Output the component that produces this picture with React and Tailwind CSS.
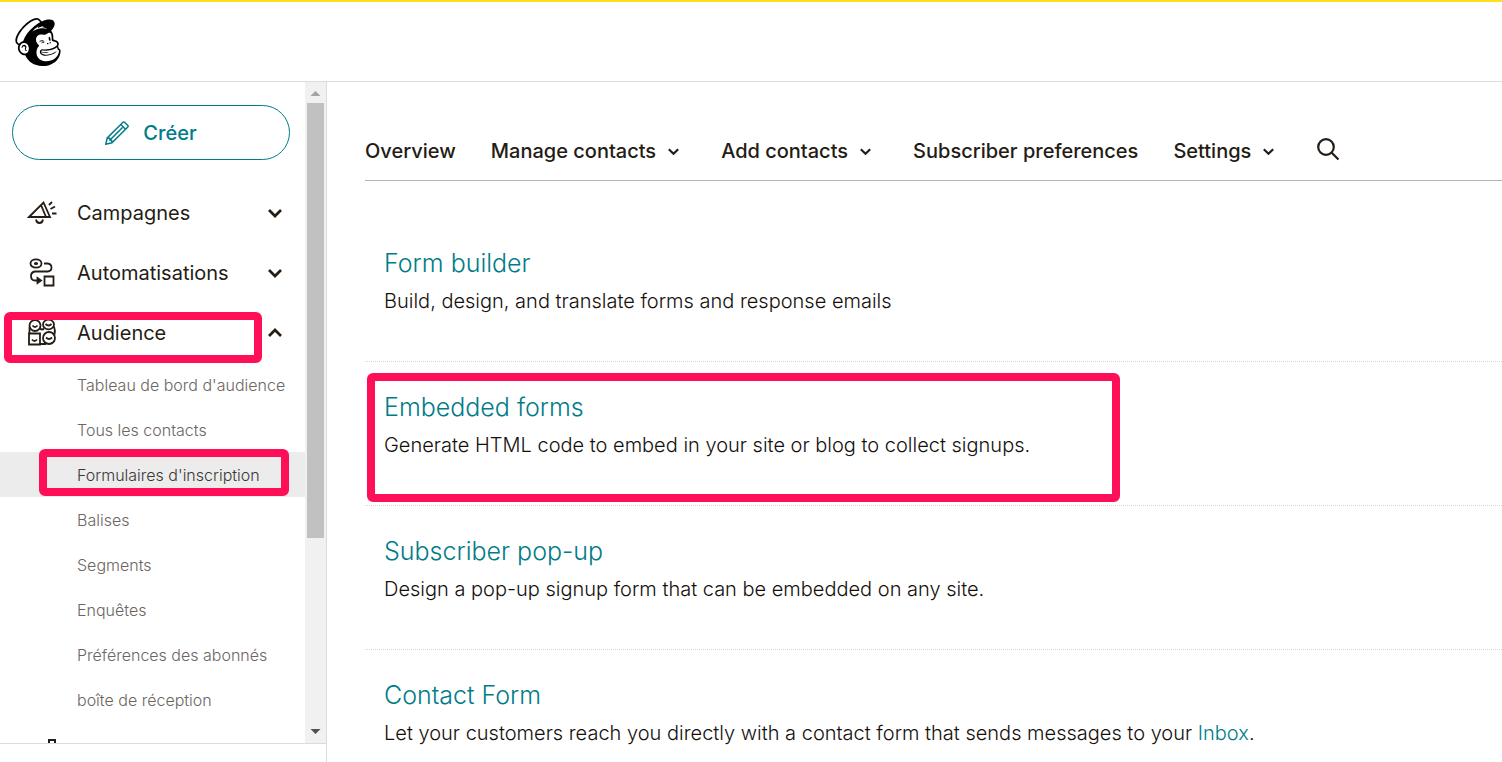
import { SiMailchimp } from 'react-icons/si'

const navItems = [
  { label: 'Overview' },
  { label: 'Manage contacts', menu: true },
  { label: 'Add contacts', menu: true },
  { label: 'Subscriber preferences' },
  { label: 'Settings', menu: true },
]

const audienceLinks = [
  "Tableau de bord d'audience",
  'Tous les contacts',
  "Formulaires d'inscription",
  'Balises',
  'Segments',
  'Enquêtes',
  'Préférences des abonnés',
  'boîte de réception',
]

const forms = [
  { title: 'Form builder', text: 'Build, design, and translate forms and response emails' },
  {
    title: 'Embedded forms',
    text: 'Generate HTML code to embed in your site or blog to collect signups.',
    marked: true,
  },
  { title: 'Subscriber pop-up', text: 'Design a pop-up signup form that can be embedded on any site.' },
  {
    title: 'Contact Form',
    text: 'Let your customers reach you directly with a contact form that sends messages to your ',
    link: 'Inbox',
  },
]

function Chevron({ className }) {
  return (
    <svg viewBox="0 0 14 14" className={className} fill="none" stroke="currentColor" strokeWidth="2.7">
      <path d="M1 4l6 6 6-6" />
    </svg>
  )
}

function PencilIcon() {
  return (
    <svg viewBox="0 0 24 24" className="w-6 h-6" fill="none" stroke="currentColor" strokeWidth="1.500">
      <path d="M.8 23.200L2.200 17 18 1.200q.8-.6 1.500 0l3.300 3.300q.6.8 0 1.500L7 21.800z" />
      <path d="M15.800 3.500l4.700 4.700M5 19L17.500 6.500M2.200 17l2.500.3.300 1.900 1.700.3.300 2.300" />
    </svg>
  )
}

function CampaignIcon() {
  return (
    <svg viewBox="0 0 30 26" className="w-[30px] h-[26px]" fill="none" stroke="currentColor" strokeWidth="1.8">
      <path d="M2 17L16.500 2.500l6.500 14.500z" />
      <path d="M14 5l5 12M9 19.500q.5 3.500 3.500 3.500t3.500-3.500M22 5l3-3M23.500 9l4.500-2.500M25 13.500h4.500" />
    </svg>
  )
}

function AutomationIcon() {
  return (
    <svg viewBox="0 0 30 30" className="w-[30px] h-[30px]" fill="none" stroke="currentColor" strokeWidth="1.8">
      <ellipse cx="9" cy="5.500" rx="5.500" ry="4.200" />
      <ellipse cx="9" cy="5.500" rx="1.200" ry=".7" fill="currentColor" />
      <path d="M17 5.500h3.500q4 .3 4 4t-4 4H8q-4 .5-4 4.700.2 4.300 4 4.300h4" />
      <path d="M10.500 20l3.500 2.500-3.500 2.500z" fill="currentColor" />
      <path d="M17.500 18.500h9v9h-9z" />
    </svg>
  )
}

function AudienceIcon() {
  return (
    <svg viewBox="0 0 30 30" className="w-[30px] h-[30px]" fill="none" stroke="currentColor" strokeWidth="1.8">
      <circle cx="8" cy="7.500" r="5.500" />
      <ellipse cx="21.500" cy="6.500" rx="5.500" ry="4.800" />
      <path d="M2 15.500h11v11H2z" />
      <circle cx="22" cy="20" r="6" />
      <path d="M2.500 9v7M13 26h6M27 8.500q1.500 4 .5 8M13 10.500q2 2 4 0M5.500 7.500q2.500 3 5 0M18.500 6q3 3 6 0M5 21.500q2.500 3 5 0M19 19.500q3 3 6 0" />
    </svg>
  )
}

function SectionButton({ icon, label, open, marked }) {
  return (
    <button aria-expanded={!!open} className="relative flex items-center w-full h-[60px] pl-[27px] pr-[23px] text-left">
      <span className="w-[50px]">{icon}</span>
      <span className="text-xl leading-6">{label}</span>
      <Chevron className={open ? 'w-[14px] h-[14px] ml-auto rotate-180' : 'w-[14px] h-[14px] ml-auto'} />
      {marked && (
        <span className="absolute left-1 top-[9px] w-[258px] h-[51px] border-8 border-[#ff0f57] rounded-md" />
      )}
    </button>
  )
}

function Scrollbar() {
  return (
    <div className="flex flex-col items-center w-[21px] shrink-0 bg-[#f1f1f1]">
      <svg viewBox="0 0 21 21" className="w-[21px] h-[21px] shrink-0">
        <path d="M5.500 14h10l-5-5z" fill="#a3a3a3" />
      </svg>
      <div className="w-[17px] grow-[435] bg-[#c1c1c1]" />
      <div className="grow-[184]" />
      <svg viewBox="0 0 21 21" className="w-[21px] h-[21px] shrink-0">
        <path d="M5.500 7h10l-5 5z" fill="#505050" />
      </svg>
    </div>
  )
}

function Sidebar() {
  return (
    <aside className="flex flex-col w-[327px] shrink-0 min-h-0 border-r border-[#dcdcdc]">
      <div className="flex flex-1 min-h-0">
        <nav className="flex-1 min-w-0 overflow-hidden">
          <div className="pl-3 pr-[15px] py-[23px]">
            <button className="flex items-center justify-center gap-[14px] w-full h-[55px] border border-[#007c89] rounded-full text-[#007c89] text-xl font-medium">
              <PencilIcon />
              Créer
            </button>
          </div>
          <SectionButton icon={<CampaignIcon />} label="Campagnes" />
          <SectionButton icon={<AutomationIcon />} label="Automatisations" />
          <SectionButton icon={<AudienceIcon />} label="Audience" open marked />
          <ul className="-mt-px">
            {audienceLinks.map((label) => {
              const active = label === "Formulaires d'inscription"
              return (
                <li key={label} className={active ? 'relative bg-[#ececec] text-[#3c3734]' : 'text-[#6b6663]'}>
                  <a href="#" className="flex items-center h-[45px] pl-[77px] text-base font-[350] whitespace-nowrap">
                    {label}
                  </a>
                  {active && (
                    <span className="absolute left-[39px] -top-[3px] w-[250px] h-[47px] border-8 border-[#ff0f57] rounded-md" />
                  )}
                </li>
              )
            })}
          </ul>
          <svg viewBox="0 0 30 30" className="w-[30px] h-[30px] ml-[27px] mt-4" fill="none" stroke="currentColor" strokeWidth="2">
            <path d="M22 26V2h6v24zM12 26V10h6v16zM2 26v-9h6v9z" />
          </svg>
        </nav>
        <Scrollbar />
      </div>
      <div className="h-[19px] shrink-0 border-t border-[#dcdcdc]" />
    </aside>
  )
}

function App() {
  return (
    <div className="flex flex-col h-screen overflow-hidden bg-white text-[#241c15] font-['Inter',sans-serif]">
      <header className="flex items-center h-[82px] shrink-0 pl-[14px] border-t-2 border-t-[#ffe01b] border-b border-b-[#dcdcdc]">
        <a href="#" aria-label="Mailchimp">
          <SiMailchimp className="w-12 h-12 text-black" />
        </a>
      </header>

      <div className="flex flex-1 min-h-0">
        <Sidebar />
        <main className="flex-1 min-w-0 pl-[38px] overflow-hidden">
          <nav className="flex items-center gap-[35px] h-[99px] pt-10 border-b border-[#b5b3b1] text-xl font-medium whitespace-nowrap">
            {navItems.map((item) => (
              <button key={item.label} className="flex items-center">
                {item.label}
                {item.menu && <Chevron className="w-[11px] h-[11px] ml-3 mr-[7px]" />}
              </button>
            ))}
            <button aria-label="Search" className="-mt-1">
              <svg viewBox="0 0 24 24" className="w-6 h-6" fill="none" stroke="currentColor" strokeWidth="2.200">
                <circle cx="10" cy="10" r="7.800" />
                <path d="M15.500 15.500l7 7" />
              </svg>
            </button>
          </nav>

          <ul className="pt-[37px]">
            {forms.map((form) => (
              <li key={form.title} className="relative h-36 pl-[19px] pt-[29px] border-b border-dotted border-[#d5d5d5]">
                <h2 className="text-[25px] leading-8 font-[350] text-[#007c89]">
                  <a href="#">{form.title}</a>
                </h2>
                <p className="mt-2 text-xl leading-7 font-[350] text-[#15100c]">
                  {form.text}
                  {form.link && (
                    <>
                      <a href="#" className="text-[#007c89]">{form.link}</a>.
                    </>
                  )}
                </p>
                {form.marked && (
                  <span className="absolute left-[2px] top-[11px] w-[753px] h-[129px] border-8 border-[#ff0f57] rounded-md" />
                )}
              </li>
            ))}
          </ul>
        </main>
      </div>
    </div>
  )
}

export default App
